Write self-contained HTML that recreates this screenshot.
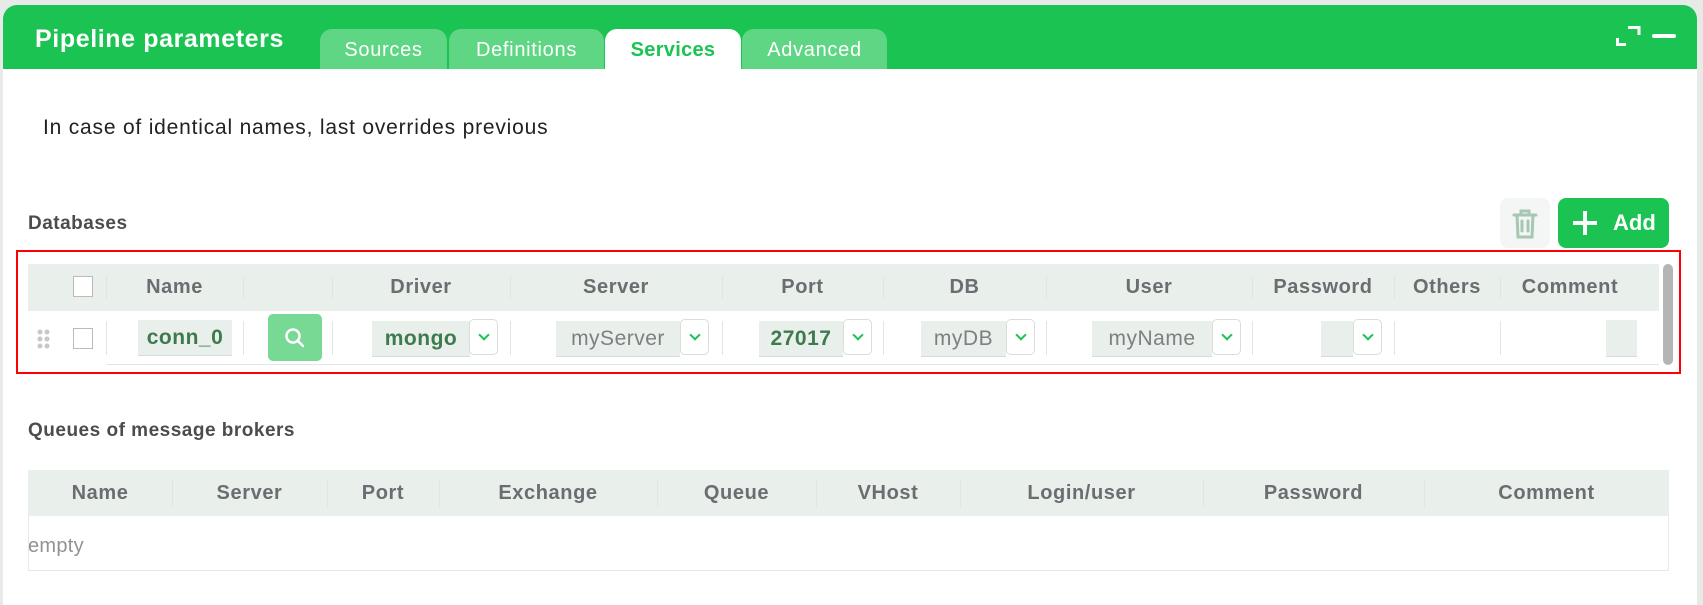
<!DOCTYPE html>
<html><head><meta charset="utf-8"><style>
*{margin:0;padding:0;box-sizing:border-box}
body{width:1703px;height:586px;background:#e6ebe8;font-family:"Liberation Sans",sans-serif;position:relative;overflow:hidden}
.a{position:absolute}
.panel{left:3px;top:5px;width:1694px;height:600px;background:#fff;border-radius:14px 14px 0 0;overflow:hidden}
.hdr{left:0;top:0;width:1694px;height:64px;background:#1bc452}
.title{left:32px;top:20px;color:#fff;font-weight:bold;font-size:25px;letter-spacing:0.6px}
.tab{top:24px;height:40px;background:#5fd683;color:#fff;font-size:20px;letter-spacing:0.7px;text-align:center;line-height:42px;border-radius:12px 12px 0 0}
.tab.on{background:#fff;color:#1bc452;font-weight:bold;letter-spacing:0.3px}
.th{color:#6b6d70;font-weight:bold;font-size:20px;letter-spacing:0.6px;text-align:center;top:0;line-height:47px}
.div{width:1px;background:#dfe5e1}
.inp{background:#e9efeb;font-size:21px;letter-spacing:0.5px;line-height:35px;text-align:center;border-bottom:1px solid #d6ddd8}
.dd{width:29px;height:36px;border:1px solid #d8dfdb;border-radius:5px;background:#fff}
.dd:after{content:"";position:absolute;left:10px;top:11px;width:6px;height:6px;border-right:2px solid #1bc452;border-bottom:2px solid #1bc452;transform:rotate(45deg)}
.cb{width:20px;height:21px;border:1px solid #bbb;background:#fff}
</style></head><body>
<div class="a panel">
 <div class="a hdr"></div>
 <div class="a title">Pipeline parameters</div>
 <div class="a tab" style="left:317px;width:127px">Sources</div>
 <div class="a tab" style="left:446px;width:155px">Definitions</div>
 <div class="a tab on" style="left:602px;width:136px">Services</div>
 <div class="a tab" style="left:739px;width:145px">Advanced</div>
 <svg class="a" style="left:1611px;top:19px" width="30" height="24" viewBox="0 0 30 24"><path d="M14 3.5H25V11M3.5 14V20.5H12" fill="none" stroke="#fff" stroke-width="3"/></svg>
 <div class="a" style="left:1649px;top:29px;width:24px;height:4px;background:#fff;border-radius:2px"></div>
 <div class="a" style="left:40px;top:111px;font-size:21px;letter-spacing:0.8px;color:#222">In case of identical names, last overrides previous</div>
 <div class="a" style="left:25px;top:208px;font-size:19px;letter-spacing:0.5px;font-weight:bold;color:#4a4d50">Databases</div>
 <div class="a" style="left:1497px;top:193px;width:50px;height:50px;background:#f3f6f4;border-radius:8px"></div>
 <svg class="a" style="left:1508px;top:203px" width="28" height="32" viewBox="0 0 28 32"><g fill="none" stroke="#a6c7b1" stroke-width="3" stroke-linecap="round"><path d="M3 7H25M10 7V3H18V7M6 7L7 29H21L22 7M11 13V23M17 13V23"/></g></svg>
 <div class="a" style="left:1555px;top:193px;width:111px;height:50px;background:#1bc452;border-radius:8px;color:#fff;font-weight:bold;font-size:22px;line-height:50px;padding-left:55px">Add</div>
 <div class="a" style="left:1580px;top:206px;width:4px;height:24px;background:#fff"></div>
 <div class="a" style="left:1570px;top:216px;width:24px;height:4px;background:#fff"></div>
</div>
<div class="a" style="left:16px;top:250px;width:1665px;height:124px;border:2px solid #f00"></div>
<div class="a" style="left:28px;top:264px;width:1631px;height:47px;background:#e9efeb">
 <div class="a cb" style="left:45px;top:12px"></div>
 <div class="a th" style="left:78px;width:137px">Name</div>
 <div class="a th" style="left:304px;width:178px">Driver</div>
 <div class="a th" style="left:482px;width:212px">Server</div>
 <div class="a th" style="left:694px;width:161px">Port</div>
 <div class="a th" style="left:855px;width:163px">DB</div>
 <div class="a th" style="left:1018px;width:206px">User</div>
 <div class="a th" style="left:1224px;width:142px">Password</div>
 <div class="a th" style="left:1366px;width:106px">Others</div>
 <div class="a th" style="left:1472px;width:140px">Comment</div>
</div>
<div class="a" style="left:1663px;top:264px;width:10px;height:101px;background:#b5b5b5;border-radius:5px"></div>
<div class="a" style="left:106px;top:364px;width:1553px;height:1px;background:#e3e7e4"></div>
<svg class="a" style="left:36px;top:329px" width="16" height="20"><g fill="#c8c8c8"><circle cx="4" cy="3" r="2.5"/><circle cx="11" cy="3" r="2.5"/><circle cx="4" cy="10" r="2.5"/><circle cx="11" cy="10" r="2.5"/><circle cx="4" cy="17" r="2.5"/><circle cx="11" cy="17" r="2.5"/></g></svg>
<div class="a cb" style="left:73px;top:328px"></div>
<div class="a" style="left:0;top:0">
 <div class="a div" style="left:106px;top:276px;height:23px"></div><div class="a div" style="left:106px;top:321px;height:34px"></div>
 <div class="a div" style="left:243px;top:276px;height:23px"></div><div class="a div" style="left:243px;top:321px;height:34px"></div>
 <div class="a div" style="left:332px;top:276px;height:23px"></div><div class="a div" style="left:332px;top:321px;height:34px"></div>
 <div class="a div" style="left:510px;top:276px;height:23px"></div><div class="a div" style="left:510px;top:321px;height:34px"></div>
 <div class="a div" style="left:722px;top:276px;height:23px"></div><div class="a div" style="left:722px;top:321px;height:34px"></div>
 <div class="a div" style="left:883px;top:276px;height:23px"></div><div class="a div" style="left:883px;top:321px;height:34px"></div>
 <div class="a div" style="left:1046px;top:276px;height:23px"></div><div class="a div" style="left:1046px;top:321px;height:34px"></div>
 <div class="a div" style="left:1252px;top:276px;height:23px"></div><div class="a div" style="left:1252px;top:321px;height:34px"></div>
 <div class="a div" style="left:1394px;top:276px;height:23px"></div><div class="a div" style="left:1394px;top:321px;height:34px"></div>
 <div class="a div" style="left:1500px;top:276px;height:23px"></div><div class="a div" style="left:1500px;top:321px;height:34px"></div>
</div>
<div class="a inp" style="left:138px;top:320px;width:94px;color:#3d7a4e;font-weight:bold">conn_0</div>
<div class="a" style="left:268px;top:314px;width:54px;height:47px;background:#77d994;border-radius:5px"></div>
<svg class="a" style="left:283px;top:326px" width="24" height="24"><circle cx="10" cy="10" r="6.5" fill="none" stroke="#fff" stroke-width="2.5"/><path d="M15 15L20 20" stroke="#fff" stroke-width="2.5" stroke-linecap="round"/></svg>
<div class="a inp" style="left:372px;top:321px;width:98px;color:#3d7a4e;font-weight:bold">mongo</div><div class="a dd" style="left:469px;top:319px"></div>
<div class="a inp" style="left:556px;top:321px;width:124px;color:#7d7f82">myServer</div><div class="a dd" style="left:680px;top:319px"></div>
<div class="a inp" style="left:759px;top:321px;width:84px;color:#3d7a4e;font-weight:bold">27017</div><div class="a dd" style="left:843px;top:319px"></div>
<div class="a inp" style="left:921px;top:321px;width:85px;color:#7d7f82">myDB</div><div class="a dd" style="left:1006px;top:319px"></div>
<div class="a inp" style="left:1092px;top:321px;width:120px;color:#7d7f82">myName</div><div class="a dd" style="left:1212px;top:319px"></div>
<div class="a inp" style="left:1321px;top:321px;width:32px;height:36px"></div><div class="a dd" style="left:1353px;top:319px"></div>
<div class="a inp" style="left:1606px;top:320px;width:31px;height:37px"></div>
<div class="a" style="left:28px;top:420px;font-size:19px;letter-spacing:0.5px;font-weight:bold;color:#4a4d50">Queues of message brokers</div>
<div class="a" style="left:28px;top:470px;width:1641px;height:101px;border:1px solid #e6eae7;border-top:0"></div>
<div class="a" style="left:28px;top:470px;width:1641px;height:46px;background:#e9efeb">
 <div class="a th" style="left:0;width:144px;line-height:46px">Name</div>
 <div class="a th" style="left:144px;width:155px;line-height:46px">Server</div>
 <div class="a th" style="left:299px;width:112px;line-height:46px">Port</div>
 <div class="a th" style="left:411px;width:218px;line-height:46px">Exchange</div>
 <div class="a th" style="left:629px;width:159px;line-height:46px">Queue</div>
 <div class="a th" style="left:788px;width:144px;line-height:46px">VHost</div>
 <div class="a th" style="left:932px;width:243px;line-height:46px">Login/user</div>
 <div class="a th" style="left:1175px;width:221px;line-height:46px">Password</div>
 <div class="a th" style="left:1396px;width:245px;line-height:46px">Comment</div>
 <div class="a div" style="left:144px;top:10px;height:27px"></div>
 <div class="a div" style="left:299px;top:10px;height:27px"></div>
 <div class="a div" style="left:411px;top:10px;height:27px"></div>
 <div class="a div" style="left:629px;top:10px;height:27px"></div>
 <div class="a div" style="left:788px;top:10px;height:27px"></div>
 <div class="a div" style="left:932px;top:10px;height:27px"></div>
 <div class="a div" style="left:1175px;top:10px;height:27px"></div>
 <div class="a div" style="left:1396px;top:10px;height:27px"></div>
</div>
<div class="a" style="left:28px;top:535px;font-size:20px;letter-spacing:0.3px;color:#909294">empty</div>
</body></html>
